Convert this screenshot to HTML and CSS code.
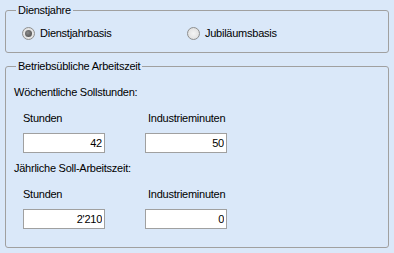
FILE: index.html
```html
<!DOCTYPE html>
<html lang="de">
<head>
    <meta charset="UTF-8">
    <meta name="viewport" content="width=device-width, initial-scale=1.0">
    <title>Arbeitszeit</title>
    <link rel="stylesheet" href="styles.css">
</head>
<body>
    <div class="panel">
        <fieldset class="group group-years">
            <legend>Dienstjahre</legend>
            <div class="radio-row">
                <label class="radio-option radio-first">
                    <input type="radio" name="basis" checked>
                    <span>Dienstjahrbasis</span>
                </label>
                <label class="radio-option">
                    <input type="radio" name="basis">
                    <span>Jubiläumsbasis</span>
                </label>
            </div>
        </fieldset>

        <fieldset class="group group-time">
            <legend>Betriebsübliche Arbeitszeit</legend>

            <div class="section-title">Wöchentliche Sollstunden:</div>
            <div class="field-grid">
                <div class="field-label">Stunden</div>
                <div class="field-label field-label-minutes">Industrieminuten</div>
                <input class="number-input" type="text" value="42">
                <input class="number-input" type="text" value="50">
            </div>

            <div class="section-title section-title-next">Jährliche Soll-Arbeitszeit:</div>
            <div class="field-grid">
                <div class="field-label">Stunden</div>
                <div class="field-label field-label-minutes">Industrieminuten</div>
                <input class="number-input" type="text" value="2'210">
                <input class="number-input" type="text" value="0">
            </div>
        </fieldset>
    </div>
</body>
</html>
```

FILE: styles.css
```css
body {
    margin: 0;
    background-color: #dae8f9;
    font-family: "Liberation Sans", Arial, sans-serif;
    font-size: 11px;
    letter-spacing: -0.25px;
    color: #000;
    height: 253px;
}
.panel {
    padding: 4px 5px 0 5px;
    width: 384px;
}
.group {
    margin: 0;
    padding: 0 0 0 8px;
    border: 1px solid #a0a0a0;
    border-radius: 3px;
    min-width: 0;
}
.group legend {
    margin-left: 2px;
    padding: 0 2px;
    line-height: 12px;
}
.group-years {
    height: 49px;
    box-sizing: border-box;
    padding-top: 11px;
}
.group-time {
    margin-top: 7px;
    height: 188px;
    box-sizing: border-box;
    padding-top: 0;
}
.radio-row {
    display: flex;
    align-items: center;
    height: 13px;
    padding-left: 8px;
}
.radio-option {
    display: flex;
    align-items: center;
    gap: 5px;
    line-height: 13px;
}
.radio-first {
    width: 165px;
}
.radio-option input {
    appearance: none;
    -webkit-appearance: none;
    margin: 0;
    width: 13px;
    height: 13px;
    border-radius: 50%;
    border: 1px solid #8e8f8f;
    background: radial-gradient(circle at 50% 50%, #f4f4f4 0, #e6e6e6 55%, #d6d6d6 100%);
    box-sizing: border-box;
    position: relative;
    flex: none;
}
.radio-option input:checked::after {
    content: "";
    position: absolute;
    left: 2px;
    top: 2px;
    width: 7px;
    height: 7px;
    border-radius: 50%;
    background: radial-gradient(circle at 40% 40%, #8a8a8a 0, #5a5a5a 70%, #4a4a4a 100%);
}
.section-title {
    line-height: 13px;
    margin-top: 14px;
}
.section-title-next {
    margin-top: 9px;
}
.field-grid {
    display: grid;
    grid-template-columns: 82px 82px;
    column-gap: 40px;
    padding-left: 9px;
}
.field-label {
    line-height: 13px;
    margin-top: 13px;
    margin-bottom: 8px;
}
.field-label-minutes {
    padding-left: 3px;
}
.number-input {
    width: 82px;
    height: 20px;
    box-sizing: border-box;
    margin: 0;
    border: 1px solid #a0a0a0;
    background: #fff;
    font-family: "Liberation Sans", Arial, sans-serif;
    font-size: 11px;
    letter-spacing: -0.25px;
    text-align: right;
    padding: 0 2px 0 2px;
    outline: none;
}
```
